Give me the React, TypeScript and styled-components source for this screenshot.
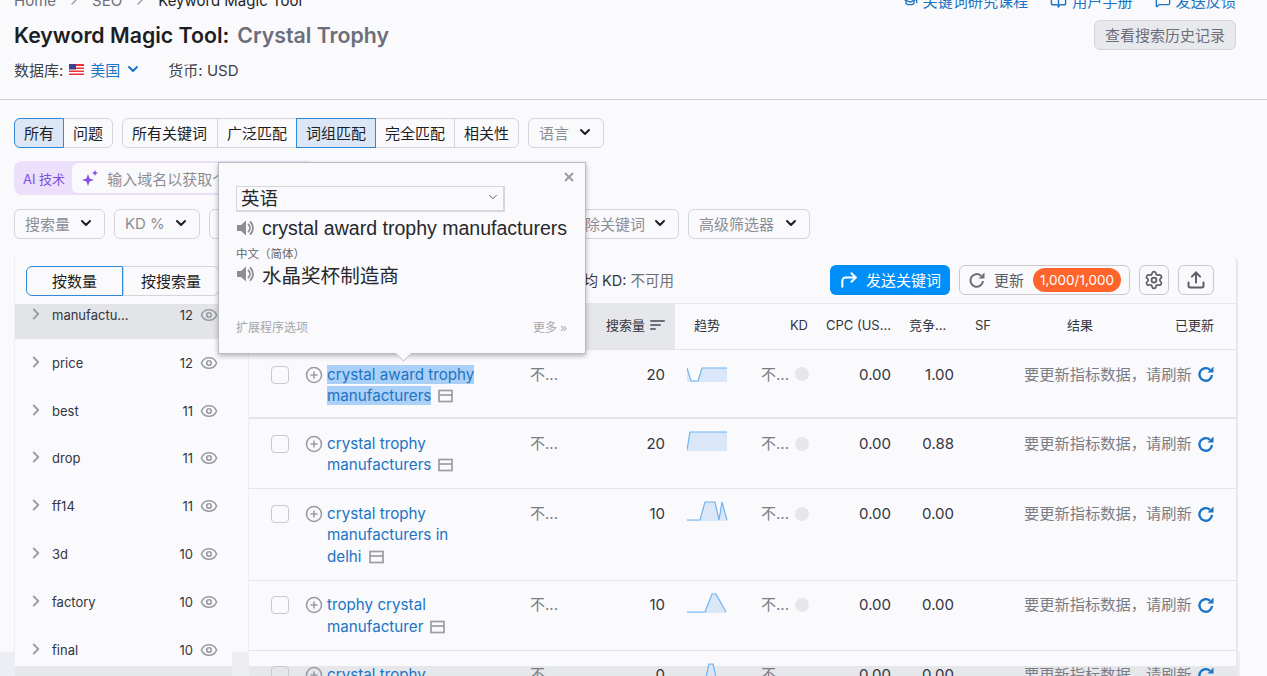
import React from 'react';
import styled, { createGlobalStyle } from 'styled-components';
import { ChevronDown, ChevronRight, CirclePlus, CornerUpRight, Eye, Settings, Upload, BookOpen, MessageSquare, GraduationCap, X } from 'lucide-react';

const GlobalStyle = createGlobalStyle`
  html, body { margin: 0; padding: 0; background: #fafafc; }
  body { font-family: Inter, "Noto Sans CJK SC", sans-serif; color: #1d1e24; }
  * { box-sizing: border-box; }
`;

const Page = styled.div`
  width: 1267px;
  height: 676px;
  overflow: hidden;
  position: relative;
  background: #fafafc;
`;

const Header = styled.header`
  display: flow-root;
  height: 100px;
  padding: 0 31px 0 14px;
  border-bottom: 1px solid #cfd0d4;
`;

const TopRow = styled.div`
  display: flex;
  justify-content: space-between;
  align-items: center;
  height: 20px;
  margin-top: -10px;
  font-size: 15px;
`;

const Crumbs = styled.div`
  display: flex;
  align-items: center;
  gap: 10px;
  color: #6c6e79;
  svg { color: #9a9ca5; }
`;

const CrumbCurrent = styled.span`
  color: #1d1e24;
`;

const TopLinks = styled.div`
  display: flex;
  gap: 22px;
`;

const TopLink = styled.span`
  display: flex;
  align-items: center;
  gap: 5px;
  color: #1b74c5;
  font-size: 15.1px;
`;

const TitleRow = styled.div`
  display: flex;
  justify-content: space-between;
  align-items: flex-start;
  height: 30px;
  margin-top: 10px;
`;

const Title = styled.h1`
  margin: 0;
  font-size: 21.3px;
  font-weight: 600;
  line-height: 30px;
`;

const TitleQuery = styled.span`
  color: #6c6e79;
  margin-left: 8px;
`;

const HistoryButton = styled.button`
  width: 142px;
  height: 30px;
  padding: 0 0 2px;
  border: 1px solid #d3d5da;
  border-radius: 6px;
  background: #e8e9ed;
  color: #6c6e79;
  font: inherit;
  font-size: 15px;
`;

const MetaRow = styled.div`
  display: flex;
  align-items: center;
  height: 22px;
  margin-top: 8px;
  font-size: 15px;
  color: #3f4149;
`;

const DatabaseValue = styled.span`
  display: flex;
  align-items: center;
  gap: 6px;
  margin: 0 27px 0 6px;
  color: #1b74c5;
  svg:last-child { margin-left: -1px; }
`;

const Filters = styled.div`
  display: flex;
  flex-direction: column;
  padding: 18px 14px 17px;
`;

const FilterRow = styled.div`
  display: flex;
  gap: 9px;
`;

const Group = styled.div`
  display: flex;
  height: 30px;
`;

const GroupButton = styled.button<{ $active?: boolean; $wide?: boolean }>`
  height: 30px;
  padding: 0 ${(p) => (p.$wide ? 10 : 9)}px 2px 9px;
  margin-left: -1px;
  border: 1px solid ${(p) => (p.$active ? '#2f87d8' : '#d3d5da')};
  background: ${(p) => (p.$active ? '#dbe7f7' : '#fafafc')};
  color: #1d1e24;
  font: inherit;
  font-size: 15px;
  white-space: nowrap;
  position: ${(p) => (p.$active ? 'relative' : 'static')};
  &:first-child { margin-left: 0; border-radius: 6px 0 0 6px; }
  &:last-child { border-radius: 0 6px 6px 0; }
`;

const SelectButton = styled.button<{ $width?: number }>`
  display: flex;
  align-items: center;
  justify-content: space-between;
  width: ${(p) => (p.$width ? `${p.$width}px` : 'auto')};
  height: 30px;
  padding: 0 10px 2px 10px;
  border: 1px solid #d3d5da;
  border-radius: 6px;
  background: #fafafc;
  color: #8b8d96;
  font: inherit;
  font-size: 15px;
  white-space: nowrap;
  svg { flex: none; color: #1d1e24; }
`;

const AiBar = styled.div`
  display: flex;
  align-items: center;
  width: 300px;
  height: 34px;
  margin: 13px 0 14px;
  padding: 2px 2px 2px 9px;
  gap: 7px;
  border-radius: 8px;
  background: #ecdffc;
`;

const AiLabel = styled.span`
  font-size: 13px;
  color: #7c4fe0;
  white-space: nowrap;
`;

const AiInput = styled.div`
  display: flex;
  align-items: center;
  flex: 1;
  height: 30px;
  padding-left: 9px;
  gap: 8px;
  border-radius: 6px;
  background: #fafafc;
  color: #8b8d96;
  font-size: 15px;
  white-space: nowrap;
  overflow: hidden;
`;

const Workspace = styled.div`
  display: flex;
  gap: 16px;
  height: 420px;
  margin-right: 27px;
  padding: 0 4px 0 14px;
  background: linear-gradient(#fafafc 0 396px, #eceef3 396px);
`;

const Sidebar = styled.aside`
  flex: 0 0 218px;
  background: linear-gradient(#fafafc 0 410px, #e6e7eb 410px);
  border-left: 1px solid #eeeff2;
`;

const SwitchRow = styled.div`
  display: flex;
  height: 48px;
  padding: 10px 0 0 11px;
`;

const SwitchButton = styled.button<{ $active?: boolean }>`
  flex: 0 0 ${(p) => (p.$active ? 97 : 96)}px;
  height: 30px;
  padding: 0 0 2px;
  border: 1px solid ${(p) => (p.$active ? '#2f87d8' : '#d3d5da')};
  border-radius: ${(p) => (p.$active ? '6px 0 0 6px' : '0 6px 6px 0')};
  background: #fafafc;
  color: #1d1e24;
  font: inherit;
  font-size: 15px;
`;

const GroupList = styled.div`
  display: flex;
  flex-direction: column;
  gap: 12.8px;
`;

const GroupItem = styled.div<{ $selected?: boolean }>`
  display: flex;
  align-items: flex-start;
  height: 35px;
  padding: 1px 0 0 12px;
  background: ${(p) => (p.$selected ? '#e3e4e8' : 'transparent')};
  font-size: 13px;
  line-height: 20px;
  svg { flex: none; color: #9a9ca5; }
`;

const GroupName = styled.span`
  width: 100px;
  margin-left: 7px;
  color: #33353c;
`;

const GroupCount = styled.span`
  width: 28px;
  margin-left: 13px;
  text-align: right;
  color: #33353c;
`;

const EyeSlot = styled.span`
  display: flex;
  height: 20px;
  align-items: center;
  margin-left: 7px;
`;

const Main = styled.main`
  flex: 0 0 988px;
  background: linear-gradient(#fafafc 0 410px, #e6e7eb 410px);
  border-right: 2px solid #e8e9ee;
  border-left: 1px solid #eeeff2;
  border-radius: 0 6px 0 0;
`;

const Toolbar = styled.div`
  display: flex;
  align-items: center;
  height: 48px;
  padding: 0 22px 0 320px;
  border-bottom: 1px solid #e6e7eb;
`;

const AverageKd = styled.span`
  flex: 1;
  font-size: 14.5px;
  color: #33353c;
`;

const MutedValue = styled.span`
  color: #6c6e79;
`;

const SendButton = styled.button`
  display: flex;
  align-items: center;
  justify-content: center;
  width: 120px;
  height: 30px;
  padding: 0;
  gap: 7px;
  border: 0;
  border-radius: 6px;
  background: #008ff8;
  color: #fff;
  font: inherit;
  font-size: 15px;
`;

const UpdateButton = styled.button`
  display: flex;
  align-items: center;
  width: 171px;
  height: 30px;
  margin-left: 9px;
  padding: 0 4px 0 8px;
  gap: 8px;
  border: 1px solid #c8cad0;
  border-radius: 6px;
  background: #fafafc;
  color: #5c5e68;
  font: inherit;
  font-size: 15px;
`;

const CreditBadge = styled.span`
  margin-left: 1px;
  padding: 0 7px;
  height: 24px;
  line-height: 24px;
  border-radius: 12px;
  background: #ff642d;
  color: #fff;
  font-size: 13.5px;
`;

const IconButton = styled.button<{ $width: number }>`
  display: flex;
  align-items: center;
  justify-content: center;
  width: ${(p) => p.$width}px;
  height: 30px;
  margin-left: 9px;
  padding: 0;
  border: 1px solid #c8cad0;
  border-radius: 6px;
  background: #fafafc;
  color: #5c5e68;
`;

const HeadRow = styled.div`
  display: grid;
  grid-template-columns: 336px 90px 105px 28px 92px 60px 80px 80px 94px;
  align-items: center;
  height: 46px;
  border-bottom: 1px solid #e3e4e8;
  font-size: 13px;
  color: #33353c;
`;

const HeadCell = styled.div<{ $pad?: number; $right?: boolean }>`
  padding-left: ${(p) => p.$pad ?? 0}px;
  padding-bottom: 4px;
  text-align: ${(p) => (p.$right ? 'right' : 'left')};
  white-space: nowrap;
`;

const SortCell = styled.div`
  display: flex;
  align-items: center;
  justify-content: flex-end;
  height: 45px;
  padding: 0 10px 4px 0;
  gap: 5px;
  background: #e6e7eb;
`;

const TableRow = styled.div<{ $thick?: boolean }>`
  display: grid;
  grid-template-columns: 56px 225px 60px 75px 96px 54px 76px 63px 70px 212px;
  align-items: start;
  padding: 13.5px 0 ${(p) => (p.$thick ? 11 : 12.7)}px;
  border-bottom: ${(p) => (p.$thick ? 2 : 1)}px solid #e3e4e8;
  font-size: 15px;
  line-height: 21.4px;
`;

const CheckCell = styled.div`
  padding: 2px 0 0 22px;
`;

const Checkbox = styled.span`
  display: block;
  width: 18px;
  height: 18px;
  border: 1px solid #c8cad0;
  border-radius: 4px;
`;

const KeywordCell = styled.div`
  display: flex;
  gap: 4px;
  svg { flex: none; margin-top: 2px; color: #9a9ca5; }
`;

const KeywordLink = styled.span`
  display: block;
  width: 153px;
  color: #1b74c5;
  font-size: 15.2px;
  mark { background: #abd0f7; color: inherit; }
`;

const WindowIcon = styled.svg`
  display: inline-block;
  vertical-align: -2px;
  margin: 0 0 0 7px !important;
`;

const Unavailable = styled.div`
  color: #7b7d85;
`;

const Numeric = styled.div`
  text-align: right;
  color: #33353c;
`;

const TrendCell = styled.div`
  margin-top: -1.5px;
  padding-left: 22px;
  svg { display: block; }
`;

const KdCell = styled.div`
  display: flex;
  align-items: center;
  justify-content: space-between;
  padding-right: 6px;
  height: 21.4px;
`;

const KdDot = styled.span`
  width: 14px;
  height: 14px;
  border-radius: 50%;
  background: #e6e7eb;
`;

const ResultCell = styled.div`
  display: flex;
  align-items: center;
  height: 21.4px;
  gap: 5px;
  font-size: 15.25px;
  color: #7b7d85;
  white-space: nowrap;
  svg { flex: none; }
`;

const Popover = styled.div`
  position: absolute;
  left: 218px;
  top: 162px;
  width: 368px;
  height: 192px;
  padding: 23px 18px 0 17px;
  border: 1px solid #bcbdc2;
  background: #fafafc;
  box-shadow: 0 2px 5px rgba(0, 0, 0, 0.28);
  font-family: "Liberation Sans", "Noto Sans CJK SC", sans-serif;
  color: #27282d;
  &::after {
    content: '';
    position: absolute;
    left: 177px;
    bottom: -8px;
    width: 14px;
    height: 14px;
    background: #fafafc;
    border-right: 1px solid #bcbdc2;
    border-bottom: 1px solid #bcbdc2;
    transform: rotate(45deg) scale(0.75);
  }
`;

const PopClose = styled.span`
  position: absolute;
  top: 7px;
  right: 9px;
  display: flex;
  color: #9a9ca5;
`;

const PopSelect = styled.div`
  display: flex;
  align-items: center;
  justify-content: space-between;
  width: 269px;
  height: 26px;
  padding: 0 3px 3px 4px;
  border: 1px solid #d6d7db;
  border-width: 1px 2px 2px 1px;
  font-size: 18.5px;
  svg { color: #5c5e68; }
`;

const PopLine = styled.div`
  display: flex;
  align-items: center;
  gap: 6px;
  height: 24px;
  margin-top: 4px;
  font-size: 19.55px;
  white-space: nowrap;
  svg { flex: none; }
`;

const PopLang = styled.div`
  margin-top: 6px;
  height: 12px;
  font-size: 11.5px;
  line-height: 16px;
  color: #66686f;
`;

const PopFooter = styled.div`
  display: flex;
  justify-content: space-between;
  margin-top: 32px;
  font-size: 12px;
  color: #a5a6ac;
`;

const Speaker = () => (
  <svg width="20" height="18" viewBox="0 0 20 18">
    <path d="M1 6h4l5-4.5v15L5 12H1z" fill="#8d8e93" />
    <path d="M12.5 5.5a5 5 0 0 1 0 7M14.5 3a8.5 8.5 0 0 1 0 12" fill="none" stroke="#8d8e93" strokeWidth="1.8" strokeLinecap="round" />
  </svg>
);

const Flag = () => (
  <svg width="15" height="11" viewBox="0 0 15 11">
    <rect width="15" height="11" fill="#e8333a" />
    <rect y="2" width="15" height="1.5" fill="#fff" />
    <rect y="5" width="15" height="1.5" fill="#fff" />
    <rect y="8" width="15" height="1.5" fill="#fff" />
    <rect width="7" height="5.5" fill="#3d3f8f" />
  </svg>
);

const Sparkle = () => (
  <svg width="18" height="18" viewBox="0 0 18 18" fill="#8a4fe3">
    <path d="M7 5l1.6 4.4L13 11l-4.4 1.6L7 17l-1.6-4.4L1 11l4.4-1.6z" />
    <path d="M14 1l.9 2.1L17 4l-2.1.9L14 7l-.9-2.1L11 4l2.1-.9z" />
  </svg>
);

const SortIcon = () => (
  <svg width="15" height="12" viewBox="0 0 15 12" fill="#6c6e79">
    <rect y="1" width="15" height="2" rx="1" />
    <rect y="5" width="11" height="2" rx="1" />
    <rect y="9" width="6" height="2" rx="1" />
  </svg>
);

const PageIcon = () => (
  <WindowIcon width="15" height="14" viewBox="0 0 15 14" fill="none" stroke="#9a9ca5" strokeWidth="1.7">
    <rect x="1" y="1.5" width="13" height="11" />
    <path d="M1 6h13" />
  </WindowIcon>
);

const Refresh = ({ color, stroke }: { color: string; stroke: number }) => (
  <svg width="18" height="18" viewBox="0 0 18 18">
    <path d="M15 10a6.3 6.3 0 1 1-2-5.2" fill="none" stroke={color} strokeWidth={stroke} />
    <path d="M16.5 1.5v6h-6z" fill={color} />
  </svg>
);

const Trend = ({ line }: { line: string }) => (
  <svg width="41" height="20" viewBox="0 0 41 20">
    <path d={`${line} V20 H0 Z`} fill="#dae7f8" />
    <path d={line} fill="none" stroke="#6fb3f2" strokeWidth="1.2" />
  </svg>
);

const groups = [
  ['manufactu...', '12'],
  ['price', '12'],
  ['best', '11'],
  ['drop', '11'],
  ['ff14', '11'],
  ['3d', '10'],
  ['factory', '10'],
  ['final', '10'],
];

const rows = [
  { keyword: 'crystal award trophy manufacturers', marked: true, volume: '20', line: 'M0 6 L4 19 H11 L15 6 H40', cpc: '0.00', comp: '1.00' },
  { keyword: 'crystal trophy manufacturers', volume: '20', line: 'M0 19 L3 1 H40', cpc: '0.00', comp: '0.88' },
  { keyword: 'crystal trophy manufacturers in delhi', volume: '10', line: 'M0 19 H13 L18 1 H28 L32 19 L35 1 L40 19', cpc: '0.00', comp: '0.00' },
  { keyword: 'trophy crystal manufacturer', volume: '10', line: 'M0 19 H18 L25 1 H29 L39 19', cpc: '0.00', comp: '0.00' },
  { keyword: 'crystal trophy manufacturers', volume: '0', line: 'M0 19 H18 L22 1 H26 L30 19 H40', cpc: '0.00', comp: '0.00' },
];

const App = () => (
  <Page>
    <GlobalStyle />
    <Header>
      <TopRow>
        <Crumbs>
          <span>Home</span>
          <ChevronRight size={16} />
          <span>SEO</span>
          <ChevronRight size={16} />
          <CrumbCurrent>Keyword Magic Tool</CrumbCurrent>
        </Crumbs>
        <TopLinks>
          <TopLink><GraduationCap size={16} />关键词研究课程</TopLink>
          <TopLink><BookOpen size={17} />用户手册</TopLink>
          <TopLink><MessageSquare size={16} />发送反馈</TopLink>
        </TopLinks>
      </TopRow>
      <TitleRow>
        <Title>Keyword Magic Tool:<TitleQuery>Crystal Trophy</TitleQuery></Title>
        <HistoryButton>查看搜索历史记录</HistoryButton>
      </TitleRow>
      <MetaRow>
        数据库:
        <DatabaseValue><Flag />美国<ChevronDown size={16} strokeWidth={3} /></DatabaseValue>
        货币: USD
      </MetaRow>
    </Header>

    <Filters>
      <FilterRow>
        <Group>
          <GroupButton $active>所有</GroupButton>
          <GroupButton>问题</GroupButton>
        </Group>
        <Group>
          <GroupButton $wide>所有关键词</GroupButton>
          <GroupButton>广泛匹配</GroupButton>
          <GroupButton $active>词组匹配</GroupButton>
          <GroupButton>完全匹配</GroupButton>
          <GroupButton>相关性</GroupButton>
        </Group>
        <SelectButton $width={76}>语言<ChevronDown size={16} strokeWidth={3} /></SelectButton>
      </FilterRow>
      <AiBar>
        <AiLabel>AI 技术</AiLabel>
        <AiInput><Sparkle />输入域名以获取个性化结果</AiInput>
      </AiBar>
      <FilterRow>
        <SelectButton $width={91}>搜索量<ChevronDown size={16} strokeWidth={3} /></SelectButton>
        <SelectButton $width={86}>KD %<ChevronDown size={16} strokeWidth={3} /></SelectButton>
        <SelectButton $width={76}>意图<ChevronDown size={16} strokeWidth={3} /></SelectButton>
        <SelectButton $width={126}>CPC<ChevronDown size={16} strokeWidth={3} /></SelectButton>
        <SelectButton $width={121}>包含关键词<ChevronDown size={16} strokeWidth={3} /></SelectButton>
        <SelectButton $width={120}>排除关键词<ChevronDown size={16} strokeWidth={3} /></SelectButton>
        <SelectButton $width={122}>高级筛选器<ChevronDown size={16} strokeWidth={3} /></SelectButton>
      </FilterRow>
    </Filters>

    <Workspace>
      <Sidebar>
        <SwitchRow>
          <SwitchButton $active>按数量</SwitchButton>
          <SwitchButton>按搜索量</SwitchButton>
        </SwitchRow>
        <GroupList>
          {groups.map(([name, count], i) => (
            <GroupItem key={name} $selected={i === 0}>
              <ChevronRight size={18} strokeWidth={2.4} />
              <GroupName>{name}</GroupName>
              <GroupCount>{count}</GroupCount>
              <EyeSlot><Eye size={18} strokeWidth={2.2} /></EyeSlot>
            </GroupItem>
          ))}
        </GroupList>
      </Sidebar>

      <Main>
        <Toolbar>
          <AverageKd>平均 KD: <MutedValue>不可用</MutedValue></AverageKd>
          <SendButton><CornerUpRight size={20} strokeWidth={2.5} />发送关键词</SendButton>
          <UpdateButton><Refresh color="#6c6e79" stroke={2} />更新<CreditBadge>1,000/1,000</CreditBadge></UpdateButton>
          <IconButton $width={30}><Settings size={20} strokeWidth={2.1} /></IconButton>
          <IconButton $width={36}><Upload size={20} strokeWidth={2.4} /></IconButton>
        </Toolbar>
        <HeadRow>
          <HeadCell>关键词</HeadCell>
          <SortCell>搜索量<SortIcon /></SortCell>
          <HeadCell $pad={19}>趋势</HeadCell>
          <HeadCell $right>KD</HeadCell>
          <HeadCell $pad={18}>CPC (US...</HeadCell>
          <HeadCell $pad={9}>竞争...</HeadCell>
          <HeadCell $pad={15}>SF</HeadCell>
          <HeadCell $pad={27}>结果</HeadCell>
          <HeadCell $right>已更新</HeadCell>
        </HeadRow>
        {rows.map((row, i) => (
          <TableRow key={i} $thick={i === 0}>
            <CheckCell><Checkbox /></CheckCell>
            <KeywordCell>
              <CirclePlus size={18} strokeWidth={2.1} />
              <KeywordLink>
                {row.marked ? <mark>{row.keyword}</mark> : row.keyword}
                <PageIcon />
              </KeywordLink>
            </KeywordCell>
            <Unavailable>不...</Unavailable>
            <Numeric>{row.volume}</Numeric>
            <TrendCell><Trend line={row.line} /></TrendCell>
            <KdCell><Unavailable>不...</Unavailable><KdDot /></KdCell>
            <Numeric>{row.cpc}</Numeric>
            <Numeric>{row.comp}</Numeric>
            <div />
            <ResultCell>要更新指标数据，请刷新<Refresh color="#1b74c5" stroke={2.4} /></ResultCell>
          </TableRow>
        ))}
      </Main>
    </Workspace>

    <Popover>
      <PopClose><X size={14} strokeWidth={3.2} /></PopClose>
      <PopSelect>英语<ChevronDown size={14} strokeWidth={1.6} /></PopSelect>
      <PopLine><Speaker />crystal award trophy manufacturers</PopLine>
      <PopLang>中文（简体）</PopLang>
      <PopLine><Speaker />水晶奖杯制造商</PopLine>
      <PopFooter><span>扩展程序选项</span><span>更多 »</span></PopFooter>
    </Popover>
  </Page>
);

export default App;
